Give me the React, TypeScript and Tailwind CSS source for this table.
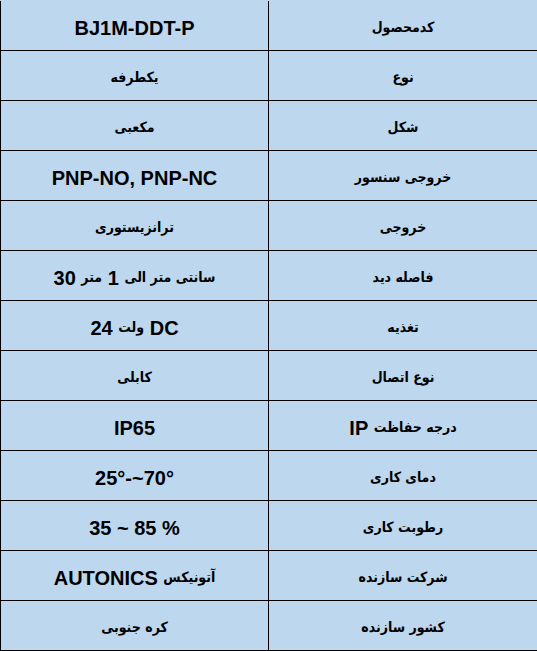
const rows: [string, string, boolean?][] = [
  ["BJ1M-DDT-P", "کدمحصول", true],
  ["یکطرفه", "نوع"],
  ["مکعبی", "شکل"],
  ["PNP-NO, PNP-NC", "خروجی سنسور", true],
  ["ترانزیستوری", "خروجی"],
  ["سانتی متر الی 1 متر 30", "فاصله دید"],
  ["DC ولت 24", "تغذیه"],
  ["کابلی", "نوع اتصال"],
  ["IP65", "درجه حفاظت IP", true],
  ["25°-~70°", "دمای کاری", true],
  ["35 ~ 85 %", "رطوبت کاری", true],
  ["آتونیکس AUTONICS", "شرکت سازنده"],
  ["کره جنوبی", "کشور سازنده"],
];

// persian runs get a narrower face and smaller size, latin stays at Arial widths
function Mixed({ text }: { text: string }) {
  const parts = text.split(/([\u0600-\u06FF][\u0600-\u06FF\s]*[\u0600-\u06FF]|[\u0600-\u06FF])/);
  return (
    <>
      {parts.map((p, i) =>
        /[\u0600-\u06FF]/.test(p) ? (
          <span
            key={i}
            className="text-[14px]"
            style={{ fontFamily: '"DejaVu Sans Condensed", "DejaVu Sans", sans-serif' }}
          >
            {p}
          </span>
        ) : (
          <span key={i}>{p}</span>
        )
      )}
    </>
  );
}

export default function App() {
  return (
    <div
      className="w-[537px] h-[651px] bg-[#bdd7ee] pt-px text-black font-bold"
      style={{ fontFamily: '"Liberation Sans", Arial, sans-serif' }}
    >
      <div className="grid grid-cols-[269px_268px]">
        {rows.map(([value, label, ltr], i) => (
          <div key={i} className="contents">
            <div
              dir={ltr ? "ltr" : "rtl"}
              className="h-[50px] border-l border-r border-b border-black flex items-center justify-center pt-1 text-[20px] whitespace-pre"
            >
              <Mixed text={value} />
            </div>
            <div
              dir="rtl"
              className="h-[50px] border-b border-black flex items-center justify-center pt-1 text-[20px] whitespace-pre"
            >
              <Mixed text={label} />
            </div>
          </div>
        ))}
      </div>
    </div>
  );
}
